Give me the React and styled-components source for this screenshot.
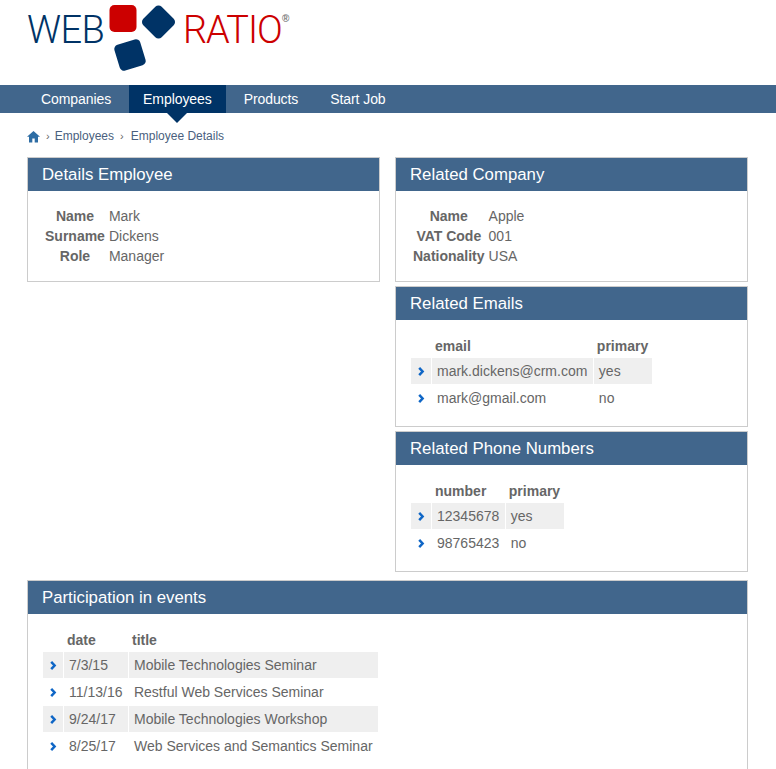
import React from "react";
import styled, { createGlobalStyle } from "styled-components";

const Global = createGlobalStyle`
  html, body { margin: 0; padding: 0; background: #fff; }
  #root { height: 769px; overflow: hidden; }
  body { font-family: "Liberation Sans", Arial, sans-serif; font-size: 14px; color: #666; }
`;

const Page = styled.div`width: 776px;`;
const Header = styled.header`height: 85px; padding-left: 27px; display: flex; align-items: flex-start;`;
const Logo = styled.div`display: flex; align-items: flex-start; height: 85px;`;
const LogoWord = styled.span`
  display: block;
  width: ${p => p.$w}px;
  font-family: Roboto, "Liberation Sans", sans-serif;
  font-weight: 300;
  font-size: 38px;
  line-height: 38px;
  letter-spacing: ${p => p.$ls}px;
  margin-top: 11px;
  white-space: nowrap;
  color: ${p => p.$color};
`;
const Mark = styled.svg`display: block; width: 79px; height: 72px; flex: none;`;
const Reg = styled.span`font-size: 10px; font-weight: 700; color: #777; line-height: 10px; margin: 14px 0 0 1px; font-family: "Liberation Sans", sans-serif;`;

const Nav = styled.nav`height: 28px; background: #41668c; display: flex; gap: 4px; padding-left: 27px;`;
const NavItem = styled.a`
  position: relative;
  padding: 0 14px;
  line-height: 28px;
  color: #fff;
  font-size: 14px;
  letter-spacing: -0.08px;
  background: ${p => (p.$active ? "#003366" : "transparent")};
  ${p => p.$active && `
    &::after {
      content: "";
      position: absolute;
      left: 50%;
      top: 100%;
      margin-left: -10px;
      border-left: 10px solid transparent;
      border-right: 10px solid transparent;
      border-top: 10px solid #003366;
    }
  `}
`;

const Crumbs = styled.div`
  height: 44px;
  padding: 2px 0 0 27px;
  display: flex;
  align-items: center;
  font-size: 12px;
  color: #4a5f7e;
  box-sizing: border-box;
`;
const Sep = styled.span`margin: 0 ${p => p.$right}px 0 6px; color: #666; font-size: 11px;`;
const HomeIcon = styled.svg`width: 13px; height: 13px; display: block;`;

const Grid = styled.div`
  display: grid;
  grid-template-columns: 353px 353px;
  column-gap: 15px;
  padding-left: 27px;
  align-items: start;
`;
const Col = styled.div`display: flex; flex-direction: column; gap: 4px;`;
const Wide = styled.div`grid-column: 1 / 3; margin-top: 8px;`;

const Panel = styled.section`
  box-sizing: border-box;
  border: 1px solid #ccc;
  height: ${p => p.$h}px;
`;
const PanelTitle = styled.h2`
  margin: 0;
  height: 33px;
  padding-left: 14px;
  background: #41668c;
  color: #fff;
  font-size: 16.8px;
  font-weight: 400;
  line-height: 33px;
`;
const PanelBody = styled.div`padding: ${p => p.$top}px 0 0 ${p => p.$left}px;`;

const Details = styled.div`
  display: grid;
  grid-template-columns: max-content max-content;
  column-gap: 4px;
  line-height: 20px;
`;
const Label = styled.div`font-weight: 700; text-align: center;`;
const Value = styled.div``;

const Table = styled.table`border-collapse: separate; border-spacing: 1px; font-size: 14px;`;
const Th = styled.th`
  text-align: left;
  font-weight: 700;
  padding: 0 3.5px 1px 3px;
  height: 20px;
  line-height: 18px;
`;
const Td = styled.td`
  padding: 0 5.5px 0 5px;
  height: 26px;
  white-space: nowrap;
  background: ${p => (p.$odd ? "#efefef" : "transparent")};
`;
const ArrowCell = styled(Td)`width: 20px; padding: 0; box-sizing: border-box;`;
const Chevron = styled.svg`width: 7px; height: 9px; display: block; margin: 0 auto;`;

const Arrow = () => (
  <Chevron viewBox="0 0 7 9"><path d="M1.2 0.9l3.4 3.6-3.4 3.6" fill="none" stroke="#0f66c6" strokeWidth="2.5" /></Chevron>
);

const DataTable = ({ headers, rows }) => (
  <Table>
    <thead>
      <tr><Th />{headers.map(h => <Th key={h}>{h}</Th>)}</tr>
    </thead>
    <tbody>
      {rows.map((r, i) => (
        <tr key={i}>
          <ArrowCell $odd={i % 2 === 0}><Arrow /></ArrowCell>
          {r.map((c, j) => <Td key={j} $odd={i % 2 === 0}>{c}</Td>)}
        </tr>
      ))}
    </tbody>
  </Table>
);

const DetailList = ({ items }) => (
  <Details>
    {items.map(([k, v]) => (
      <React.Fragment key={k}>
        <Label>{k}</Label>
        <Value>{v}</Value>
      </React.Fragment>
    ))}
  </Details>
);

export default function App() {
  return (
    <Page>
      <Global />
      <Header>
        <Logo>
          <LogoWord $color="#003366" $w={77} $ls={-0.6}>WEB</LogoWord>
          <Mark viewBox="0 0 79 72">
            <rect x="5.5" y="5" width="27" height="27" rx="5" fill="#cc0000" />
            <rect x="41.5" y="9" width="26" height="26" rx="4.5" fill="#003366" transform="rotate(45 54.5 22)" />
            <rect x="12.5" y="41.5" width="27" height="27" rx="4.5" fill="#003366" transform="rotate(-17 26 55)" />
          </Mark>
          <LogoWord $color="#cc0000" $w={98} $ls={-1.1}>RATIO</LogoWord>
          <Reg>®</Reg>
        </Logo>
      </Header>
      <Nav>
        <NavItem>Companies</NavItem>
        <NavItem $active>Employees</NavItem>
        <NavItem>Products</NavItem>
        <NavItem>Start Job</NavItem>
      </Nav>
      <Crumbs>
        <HomeIcon viewBox="0 0 13 12"><path d="M6.5 0.5L0 6.3h2V12h3.3V8h2.4v4H11V6.3h2z" fill="#2e6da4" /></HomeIcon>
        <Sep $right={5}>›</Sep>Employees<Sep $right={7}>›</Sep>Employee Details
      </Crumbs>
      <Grid>
        <Col>
          <Panel $h={125}>
            <PanelTitle>Details Employee</PanelTitle>
            <PanelBody $top={15} $left={17}>
              <DetailList items={[["Name", "Mark"], ["Surname", "Dickens"], ["Role", "Manager"]]} />
            </PanelBody>
          </Panel>
        </Col>
        <Col>
          <Panel $h={125}>
            <PanelTitle>Related Company</PanelTitle>
            <PanelBody $top={15} $left={17}>
              <DetailList items={[["Name", "Apple"], ["VAT Code", "001"], ["Nationality", "USA"]]} />
            </PanelBody>
          </Panel>
          <Panel $h={141}>
            <PanelTitle>Related Emails</PanelTitle>
            <PanelBody $top={15} $left={14}>
              <DataTable headers={["email", "primary"]} rows={[["mark.dickens@crm.com", "yes"], ["mark@gmail.com", "no"]]} />
            </PanelBody>
          </Panel>
          <Panel $h={141}>
            <PanelTitle>Related Phone Numbers</PanelTitle>
            <PanelBody $top={15} $left={14}>
              <DataTable headers={["number", "primary"]} rows={[["12345678", "yes"], ["98765423", "no"]]} />
            </PanelBody>
          </Panel>
        </Col>
        <Wide>
          <Panel $h={230}>
            <PanelTitle>Participation in events</PanelTitle>
            <PanelBody $top={15} $left={14}>
              <DataTable
                headers={["date", "title"]}
                rows={[
                  ["7/3/15", "Mobile Technologies Seminar"],
                  ["11/13/16", "Restful Web Services Seminar"],
                  ["9/24/17", "Mobile Technologies Workshop"],
                  ["8/25/17", "Web Services and Semantics Seminar"],
                ]}
              />
            </PanelBody>
          </Panel>
        </Wide>
      </Grid>
    </Page>
  );
}
